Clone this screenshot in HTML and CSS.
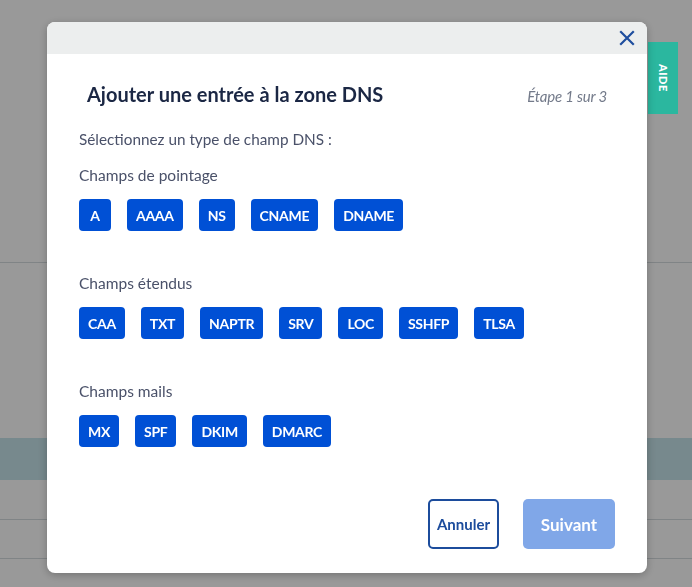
FILE: index.html
```html
<!DOCTYPE html>
<html lang="fr">
<head>
    <meta charset="UTF-8">
    <meta name="viewport" content="width=device-width, initial-scale=1.0">
    <title>Ajouter une entrée DNS</title>
    <link rel="stylesheet" href="styles.css">
</head>
<body>
    <div class="page">
        <div class="page-line line-top"></div>
        <div class="page-band"></div>
        <div class="page-line line-mid"></div>
        <div class="page-line line-low"></div>
    </div>
    <div class="overlay"></div>

    <button class="help-tab">AIDE</button>

    <div class="modal">
        <div class="modal-header">
            <button class="close" aria-label="Fermer">
                <svg width="16" height="16" viewBox="0 0 16 16">
                    <path d="M2 2 L14 14 M14 2 L2 14" stroke="#1f4e9e" stroke-width="2.2" stroke-linecap="square"/>
                </svg>
            </button>
        </div>
        <div class="modal-body">
            <div class="title-row">
                <h2 class="title">Ajouter une entrée à la zone DNS</h2>
                <span class="step">Étape 1 sur 3</span>
            </div>

            <p class="intro">Sélectionnez un type de champ DNS :</p>

            <div class="group">
                <p class="group-label">Champs de pointage</p>
                <div class="types">
                    <button class="type">A</button>
                    <button class="type">AAAA</button>
                    <button class="type">NS</button>
                    <button class="type">CNAME</button>
                    <button class="type">DNAME</button>
                </div>
            </div>

            <div class="group">
                <p class="group-label">Champs étendus</p>
                <div class="types">
                    <button class="type">CAA</button>
                    <button class="type">TXT</button>
                    <button class="type">NAPTR</button>
                    <button class="type">SRV</button>
                    <button class="type">LOC</button>
                    <button class="type">SSHFP</button>
                    <button class="type">TLSA</button>
                </div>
            </div>

            <div class="group">
                <p class="group-label">Champs mails</p>
                <div class="types">
                    <button class="type">MX</button>
                    <button class="type">SPF</button>
                    <button class="type">DKIM</button>
                    <button class="type">DMARC</button>
                </div>
            </div>

            <div class="actions">
                <button class="btn-cancel">Annuler</button>
                <button class="btn-next" disabled>Suivant</button>
            </div>
        </div>
    </div>
</body>
</html>
```

FILE: styles.css
```css
body {
    margin: 0;
    height: 587px;
    overflow: hidden;
    font-family: 'Source Sans Pro', 'Lato', sans-serif;
    background-color: #ffffff;
}
.page {
    position: fixed;
    inset: 0;
}
.page-line {
    position: absolute;
    left: 0;
    right: 0;
    height: 1px;
    background-color: #d6dde0;
}
.line-top { top: 262px; }
.line-mid { top: 519px; }
.line-low { top: 558px; }
.page-band {
    position: absolute;
    left: 0;
    right: 0;
    top: 438px;
    height: 42px;
    background-color: #c6e4ec;
}
.overlay {
    position: fixed;
    inset: 0;
    background-color: rgba(0, 0, 0, 0.4);
}
.help-tab {
    position: fixed;
    left: 648px;
    top: 42px;
    width: 30px;
    height: 72px;
    border: none;
    padding: 0;
    background-color: #2bb79f;
    color: #ffffff;
    font-family: 'Lato', sans-serif;
    font-weight: 900;
    font-size: 11px;
    letter-spacing: 0.5px;
    writing-mode: vertical-rl;
}
.modal {
    position: fixed;
    left: 47px;
    top: 22px;
    width: 600px;
    height: 551px;
    background-color: #ffffff;
    border-radius: 8px;
    overflow: hidden;
    box-shadow: 0 2px 8px rgba(0, 0, 0, 0.25);
    display: flex;
    flex-direction: column;
}
.modal-header {
    height: 32px;
    background-color: #eceeee;
    display: flex;
    justify-content: flex-end;
    align-items: center;
    padding-right: 12px;
}
.close {
    border: none;
    background: none;
    padding: 0;
    width: 16px;
    height: 16px;
    display: flex;
}
.modal-body {
    flex: 1;
    padding: 0 32px 24px 32px;
    display: flex;
    flex-direction: column;
}
.title-row {
    display: flex;
    justify-content: space-between;
    align-items: baseline;
    padding: 28px 8px 0 8px;
}
.title {
    margin: 0;
    font-size: 20px;
    font-weight: 700;
    color: #1b2744;
}
.step {
    font-size: 15px;
    font-style: italic;
    color: #737a8a;
    letter-spacing: -0.2px;
}
.intro {
    margin: 23px 0 0 0;
    font-size: 15.3px;
    line-height: 20px;
    color: #4a5169;
}
.group {
    margin-bottom: 42px;
}
.group-label {
    margin: 16px 0 14px 0;
    font-size: 15.5px;
    line-height: 20px;
    color: #4a5169;
}
.group + .group .group-label {
    margin-top: 0;
}
.types {
    display: flex;
    gap: 16px;
}
.type {
    height: 32px;
    min-width: 32px;
    padding: 0 9px;
    border: none;
    border-radius: 4px;
    background-color: #0050d5;
    color: #ffffff;
    font-family: inherit;
    font-weight: 700;
    font-size: 14px;
    letter-spacing: -0.3px;
}
.actions {
    margin-top: auto;
    display: flex;
    justify-content: flex-end;
    gap: 24px;
}
.btn-cancel {
    height: 50px;
    width: 71px;
    border: 2px solid #1c4c9c;
    border-radius: 5px;
    background: #ffffff;
    color: #1c4c9c;
    font-family: inherit;
    font-weight: 700;
    font-size: 15px;
    padding: 0;
}
.btn-next {
    height: 50px;
    width: 92px;
    border: none;
    border-radius: 5px;
    background-color: #80a7e8;
    color: #ffffff;
    font-family: inherit;
    font-weight: 700;
    font-size: 17px;
}
```
